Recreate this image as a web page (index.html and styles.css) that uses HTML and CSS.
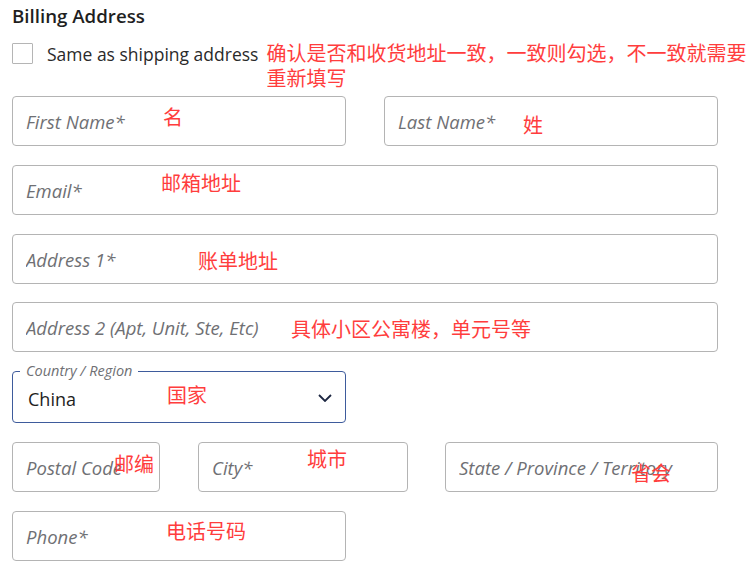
FILE: index.html
```html
<!DOCTYPE html>
<html lang="zh">
<head>
<meta charset="utf-8">
<title>Billing Address</title>
<link rel="stylesheet" href="styles.css">
</head>
<body>
<div class="page">
  <h2 class="title">Billing Address</h2>
  <div class="check-row">
    <span class="box"></span>
    <span class="check-label">Same as shipping address</span>
    <span class="note-inline">确认是否和收货地址一致，一致则勾选，不一致就需要重新填写</span>
  </div>

  <div class="fields">
    <div class="row two">
      <div class="field">
        <input class="input" placeholder="First Name*">
        <span class="note n-first">名</span>
      </div>
      <div class="field">
        <input class="input" placeholder="Last Name*">
        <span class="note n-last">姓</span>
      </div>
    </div>

    <div class="field full">
      <input class="input" placeholder="Email*">
      <span class="note n-email">邮箱地址</span>
    </div>

    <div class="field full">
      <input class="input" placeholder="Address 1*">
      <span class="note n-addr1">账单地址</span>
    </div>

    <div class="field full addr2">
      <input class="input" placeholder="Address 2 (Apt, Unit, Ste, Etc)">
      <span class="note n-addr2">具体小区公寓楼，单元号等</span>
    </div>

    <div class="row two">
      <div class="field select">
        <span class="select-label">Country / Region</span>
        <span class="select-value">China</span>
        <svg class="chevron" width="14" height="8" viewBox="0 0 14 8"><path d="M1 1 L7 7 L13 1" fill="none" stroke="#1d2742" stroke-width="1.8"/></svg>
        <span class="note n-country">国家</span>
      </div>
      <div></div>
    </div>

    <div class="row three">
      <div class="field">
        <input class="input" placeholder="Postal Code">
        <span class="note n-postal">邮编</span>
      </div>
      <div class="field">
        <input class="input" placeholder="City*">
        <span class="note n-city">城市</span>
      </div>
      <div class="field">
        <input class="input" placeholder="State / Province / Territory">
        <span class="note n-state">省会</span>
      </div>
    </div>

    <div class="row two">
      <div class="field">
        <input class="input" placeholder="Phone*">
        <span class="note n-phone">电话号码</span>
      </div>
      <div></div>
    </div>
  </div>
</div>
</body>
</html>
```

FILE: styles.css
```css
* { box-sizing: border-box; }

html, body {
  margin: 0;
  padding: 0;
  background: #ffffff;
}

body {
  font-family: "Open Sans", "Noto Sans CJK SC", sans-serif;
  color: #222222;
}

.page {
  width: 755px;
  padding: 3px 37px 0 12px;
}

.title {
  margin: 0;
  font-size: 18.7px;
  line-height: 26px;
  font-weight: 600;
  color: #1f1f1f;
}

.check-row {
  margin-top: 11px;
  display: flex;
  align-items: flex-start;
  height: 50px;
}

.box {
  flex: none;
  width: 21px;
  height: 21px;
  margin-top: 3px;
  margin-right: 14px;
  border: 1px solid #b5b5b5;
  border-radius: 1px;
  background: #fff;
}

.check-label {
  flex: none;
  font-size: 17.5px;
  line-height: 25px;
  margin-top: 2px;
  color: #2a2a2a;
}

.note-inline {
  flex: none;
  width: 482px;
  margin-left: 8px;
  font-family: "Noto Sans CJK SC", sans-serif;
  font-size: 20px;
  line-height: 25px;
  color: #ff3d3d;
}

.fields {
  margin-top: 6px;
  display: flex;
  flex-direction: column;
  gap: 19px;
}

.row {
  display: grid;
}

.row.two {
  grid-template-columns: 334px 334px;
  column-gap: 38px;
}

.row.three {
  grid-template-columns: 148px 210px 272px;
  column-gap: 38px;
}

.row.three .field:last-child {
  margin-left: -1px;
}

.field {
  position: relative;
  height: 50px;
}

.field.full {
  width: 706px;
}

.field.addr2 {
  margin-top: -1px;
}

.input {
  display: block;
  width: 100%;
  height: 100%;
  margin: 0;
  padding: 0 13px;
  border: 1px solid #b4b4b4;
  border-radius: 4px;
  background: #fff;
  font-family: "Open Sans", sans-serif;
  font-size: 18.5px;
  color: #222;
  outline: none;
}

.input::placeholder {
  font-style: italic;
  color: #6f7074;
  opacity: 1;
}

.select {
  height: 52px;
  border: 1px solid #3e5b9c;
  border-radius: 4px;
  display: flex;
  align-items: center;
  padding: 0 13px 0 15px;
}

.select-label {
  position: absolute;
  left: 7px;
  top: -10px;
  padding: 0 6px;
  background: #fff;
  font-size: 14.5px;
  line-height: 18px;
  font-style: italic;
  color: #6f7074;
}

.select-value {
  flex: 1;
  font-size: 18px;
  margin-top: 4px;
  color: #1e1e1e;
}

.chevron {
  margin-top: 2px;
}

.note {
  position: absolute;
  font-family: "Noto Sans CJK SC", sans-serif;
  font-size: 20px;
  line-height: 20px;
  color: #ff3d3d;
  white-space: nowrap;
  pointer-events: none;
}

.n-first { left: 151px; top: 11px; }
.n-last { left: 139px; top: 19px; }
.n-email { left: 149px; top: 8px; }
.n-addr1 { left: 186px; top: 17px; }
.n-addr2 { left: 279px; top: 17px; }
.n-country { left: 154px; top: 13px; }
.n-postal { left: 102px; top: 12px; }
.n-city { left: 109px; top: 7px; }
.n-state { left: 186px; top: 21px; }
.n-phone { left: 154px; top: 10px; }
```
